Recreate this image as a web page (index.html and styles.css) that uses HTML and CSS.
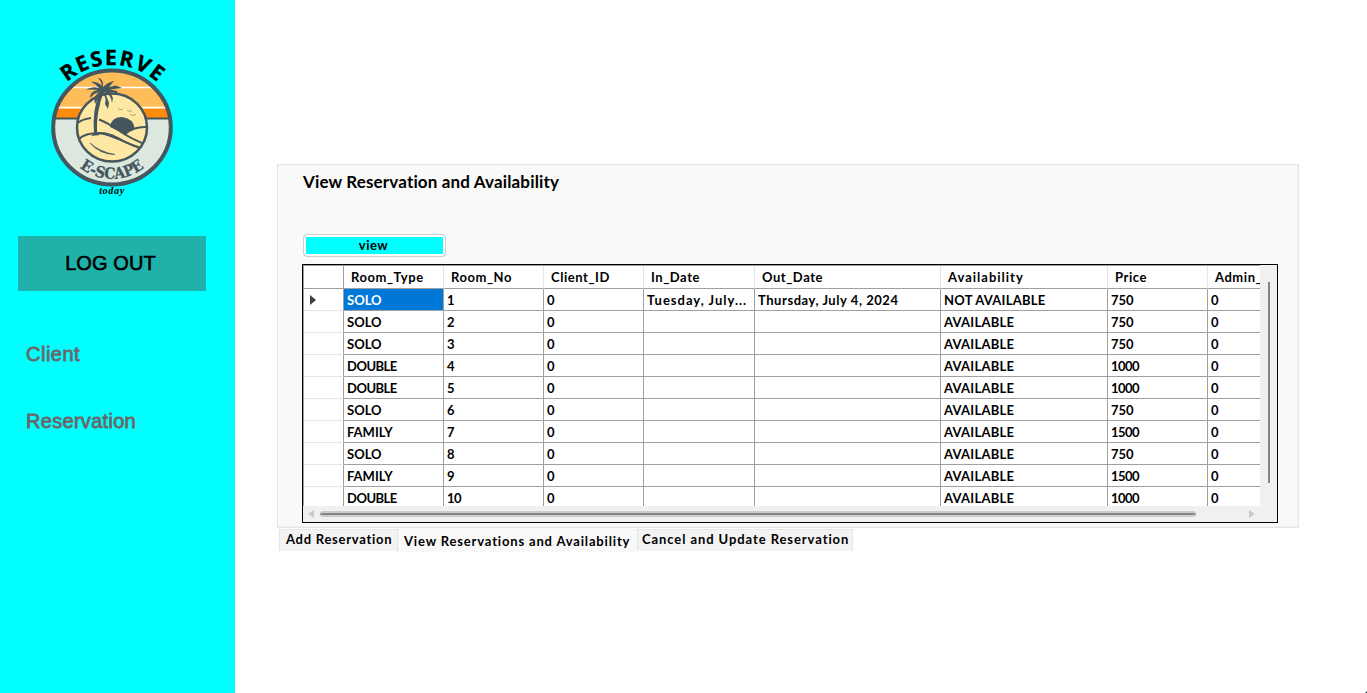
FILE: index.html
```html
<!DOCTYPE html>
<html lang="en">
<head>
<meta charset="utf-8">
<title>Reservations</title>
<link rel="stylesheet" href="styles.css">
</head>
<body>
<aside class="sidebar">
<svg class="logo" viewBox="40 40 145 165" width="145" height="165" role="img" aria-label="Reserve E-scape today">
<defs>
<clipPath id="ring"><ellipse cx="112" cy="127.500" rx="59" ry="57"/></clipPath>
<clipPath id="scene"><ellipse cx="112" cy="127.500" rx="35" ry="34"/></clipPath>
<path id="arc-top" d="M52 101.500 A67.500 67.500 0 0 1 172 101.500"/>
<path id="arc-bottom" d="M64 146 A51.500 51.500 0 0 0 160 146"/>
</defs>
<g clip-path="url(#ring)">
<rect x="50" y="68" width="124" height="51" fill="#ffbd59"/>
<rect x="50" y="109" width="124" height="10" fill="#ff8a0c"/>
<path d="M50 87.500H174M50 107.500H174" stroke="#fff" stroke-width="1.300"/>
<rect x="50" y="118" width="124" height="70" fill="#dce8df"/>
<path d="M50 118.500H174" stroke="#46565d" stroke-width="2"/>
</g>
<ellipse cx="112" cy="127.500" rx="58.800" ry="57" fill="none" stroke="#44565e" stroke-width="4"/>
<ellipse cx="112" cy="127.500" rx="35" ry="34" fill="#ffe8a3"/>
<g clip-path="url(#scene)" fill="none" stroke="#44565e" stroke-width="2">
<path d="M110 126Q112 117 122 117Q133 118 135 129Q130 129 125 134L110 127Z" fill="#44565e" stroke="none"/>
<path d="M76 124Q82 119 91 118M99 119.500Q108 123 118 130Q131 139 147 145M125 134Q134 126 148 127M79 139Q85 133 99 133Q112 135 123 141Q133 146 144 149"/>
<path d="M98 132Q110 131 125 141L118 140Z" fill="#44565e" stroke="none"/>
<path d="M90 143Q100 152 115 154.500Q100 154.500 90 143Z" fill="#44565e" stroke-width=".6"/>
<path d="M118 108.500l2 1.500 3-1M127 110l2 1.500 3-1M130 114l3 1.500 3-1" stroke="#a59e7d" stroke-width=".9"/>
</g>
<ellipse cx="112" cy="127.500" rx="35" ry="34" fill="none" stroke="#44565e" stroke-width="2.500"/>
<path d="M100 91Q92 110 94 133L91 136L100 135L97 132Q96 112 104 91Z" fill="#44565e"/>
<path d="M103 87Q104 79 98 77.500L101 82L102 86Q97 81 91 82L95 84L99 88Q91 86 86 90L91 89.500L98 90Q90 91 90 98L94 94L99 92Q93 97 95 104L98 98L102 93Q107 97 105 104L108 109L109 103L106 95L104 92Q111 94 112 103L113 98L110 92Q117 92 119 96L117 91L110 89.500L122 88L116 85.500L109 87L114 81L108 83Z" fill="#44565e"/>
<text class="logo-top"><textPath href="#arc-top" startOffset="50.600%" text-anchor="middle">RESERVE</textPath></text>
<text class="logo-name"><textPath href="#arc-bottom" startOffset="50%" text-anchor="middle">E-SCAPE</textPath></text>
<text class="logo-today" x="112" y="194" text-anchor="middle">today</text>
</svg>
<button class="logout">LOG OUT</button>
<nav class="nav"><a class="client">Client</a><a>Reservation</a></nav>
</aside>
<main class="content">
<section class="panel">
<h1 class="title">View Reservation and Availability</h1>
<button class="view">view</button>
<div class="grid">
<div class="viewport"><table class="rooms">
<colgroup><col class="c0"><col class="c1"><col class="c1"><col class="c1"><col class="c4"><col class="c5"><col class="c6"><col class="c1"><col class="c1"></colgroup>
<thead><tr><th></th><th>Room_Type</th><th>Room_No</th><th>Client_ID</th><th>In_Date</th><th>Out_Date</th><th class="wide">Availability</th><th>Price</th><th>Admin_</th></tr></thead>
<tbody>
<tr><th><svg class="marker" width="6" height="10" viewBox="0 0 6 10"><path d="M0 0L6 5L0 10Z"/></svg></th><td class="selected">SOLO</td><td>1</td><td>0</td><td class="wide">Tuesday, July...</td><td class="date">Thursday, July 4, 2024</td><td class="status">NOT AVAILABLE</td><td>750</td><td>0</td></tr>
<tr><th></th><td>SOLO</td><td>2</td><td>0</td><td></td><td></td><td class="status">AVAILABLE</td><td>750</td><td>0</td></tr>
<tr><th></th><td>SOLO</td><td>3</td><td>0</td><td></td><td></td><td class="status">AVAILABLE</td><td>750</td><td>0</td></tr>
<tr><th></th><td class="tight">DOUBLE</td><td>4</td><td>0</td><td></td><td></td><td class="status">AVAILABLE</td><td class="tight">1000</td><td>0</td></tr>
<tr><th></th><td class="tight">DOUBLE</td><td>5</td><td>0</td><td></td><td></td><td class="status">AVAILABLE</td><td class="tight">1000</td><td>0</td></tr>
<tr><th></th><td>SOLO</td><td>6</td><td>0</td><td></td><td></td><td class="status">AVAILABLE</td><td>750</td><td>0</td></tr>
<tr><th></th><td>FAMILY</td><td>7</td><td>0</td><td></td><td></td><td class="status">AVAILABLE</td><td class="tight">1500</td><td>0</td></tr>
<tr><th></th><td>SOLO</td><td>8</td><td>0</td><td></td><td></td><td class="status">AVAILABLE</td><td>750</td><td>0</td></tr>
<tr><th></th><td>FAMILY</td><td>9</td><td>0</td><td></td><td></td><td class="status">AVAILABLE</td><td class="tight">1500</td><td>0</td></tr>
<tr><th></th><td class="tight">DOUBLE</td><td class="tight">10</td><td>0</td><td></td><td></td><td class="status">AVAILABLE</td><td class="tight">1000</td><td>0</td></tr>
</tbody></table></div>
<div class="vscroll"><div class="vthumb"></div></div>
<div class="hscroll"><svg width="6" height="8" viewBox="0 0 6 8"><path d="M6 0L0 4L6 8Z"/></svg><div class="hthumb"></div><svg width="6" height="8" viewBox="0 0 6 8"><path d="M0 0L6 4L0 8Z"/></svg></div>
</div>
</section>
<div class="tabs"><div class="tab tab-add">Add Reservation</div><div class="tab tab-view">View Reservations and Availability</div><div class="tab tab-cancel">Cancel and Update Reservation</div></div>
</main>
<svg class="grip" width="2" height="2" viewBox="0 0 2 2"><path d="M2 0V2H0Z"/></svg>
</body>
</html>
```
FILE: styles.css
```css
* { box-sizing: border-box; }
body { margin: 0; width: 1367px; height: 693px; overflow: hidden; display: flex; background: #fff; color: #000; font: bold 13px Lato, "Noto Sans", sans-serif; }
button { font: inherit; color: inherit; border: 0; padding: 0; }
.sidebar { width: 235px; height: 693px; background: #0ff; padding-top: 40px; font: 20px "Liberation Sans", Arial, sans-serif; }
.logo { display: block; margin-left: 40px; }
.logo-top { font: 700 21px "Open Sans", sans-serif; letter-spacing: 1.7px; stroke: #000; stroke-width: .4px; }
.logo-name { font: bold condensed 15.5px "DejaVu Serif Condensed", "DejaVu Serif", serif; fill: #44565e; stroke: #44565e; stroke-width: .3px; }
.logo-today { font: italic bold 10px "Liberation Serif", serif; letter-spacing: .7px; }
.logout { display: block; width: 188px; height: 55px; margin: 31px 0 0 18px; padding-right: 3px; background: #20b2aa; letter-spacing: .1px; -webkit-text-stroke: .6px #000; }
.nav { display: flex; flex-direction: column; gap: 44px; padding: 52px 0 0 26px; color: #696969; line-height: 23px; -webkit-text-stroke: .8px #696969; letter-spacing: .3px; }
.client { letter-spacing: .5px; }
.content { width: 1132px; padding: 164px 0 0 42px; }
.panel { width: 1022px; height: 364px; background: #f9f9f9; border: 1px solid #e5e5e5; box-shadow: inset -1px -1px #f3f3f3; padding-left: 24px; }
.title { margin: 0; padding: 6px 0 0 1px; height: 69px; font-size: 17px; font-weight: bold; line-height: 21px; letter-spacing: .15px; }
.view { display: block; width: 143px; height: 23px; margin-left: 1px; border: 1px solid #d0d0d0; border-radius: 4px; background: #0ff; box-shadow: inset 0 0 0 2px #fdfdfd; padding: 0 2px 2px 0; letter-spacing: .5px; }
.grid { display: grid; grid-template: 241px 15px / 957px 17px; width: 976px; height: 259px; margin-top: 7px; border: 1px solid #000; background: #f0f0f0; }
.viewport { overflow: hidden; border-top: 1px solid #a0a0a0; border-left: 1px solid #a0a0a0; background: #fff; }
.rooms { table-layout: fixed; width: 1004px; border-collapse: separate; border-spacing: 0; }
.c0 { width: 40px; } .c1 { width: 100px; } .c4 { width: 111px; } .c5 { width: 186px; } .c6 { width: 167px; }
th, td { height: 22px; padding: 0 0 0 3px; border-right: 1px solid #a0a0a0; border-bottom: 1px solid #a0a0a0; text-align: left; line-height: 18px; white-space: nowrap; }
thead th { height: 23px; padding-left: 7px; border-right-color: #e5e5e5; letter-spacing: .55px; }
tbody th { border-bottom-color: #e5e5e5; padding-left: 6px; }
th:first-child { border-right-color: #a0a0a0; }
.selected { background: #0078d7; color: #fff; }
.wide, thead .wide { letter-spacing: 1px; }
.date { letter-spacing: .55px; }
.status { letter-spacing: .24px; }
.tight { letter-spacing: -.5px; }
.marker { display: block; fill: #404040; }
.vthumb { width: 2px; height: 201px; margin: 17px 0 0 8px; background: #858585; }
.hscroll { grid-column: 1 / 3; display: flex; align-items: center; padding-left: 5px; fill: #c8c8c8; }
.hthumb { width: 876px; height: 6px; margin: 0 53px 0 6px; border: solid #cdcdcd; border-width: 2px 0; border-radius: 3px; background: #858585; }
.tabs { display: flex; align-items: flex-start; padding-left: 2px; }
.tab { line-height: 19px; white-space: nowrap; }
.tab-add { width: 118px; height: 22px; margin-top: 1px; padding-left: 6px; background: #f3f3f3; border-top: 1px solid #e5e5e5; border-left: 1px solid #e5e5e5; letter-spacing: .73px; }
.tab-view { width: 240px; height: 24px; padding: 4px 0 0 6px; background: #f9f9f9; border-left: 1px solid #e5e5e5; letter-spacing: .84px; }
.tab-cancel { width: 216px; height: 22px; margin-top: 1px; padding-left: 4px; background: #f3f3f3; border: solid #e5e5e5; border-width: 1px 1px 0; letter-spacing: .92px; }
.grip { position: absolute; right: 0; bottom: 0; fill: #1d3a4a; }
```
